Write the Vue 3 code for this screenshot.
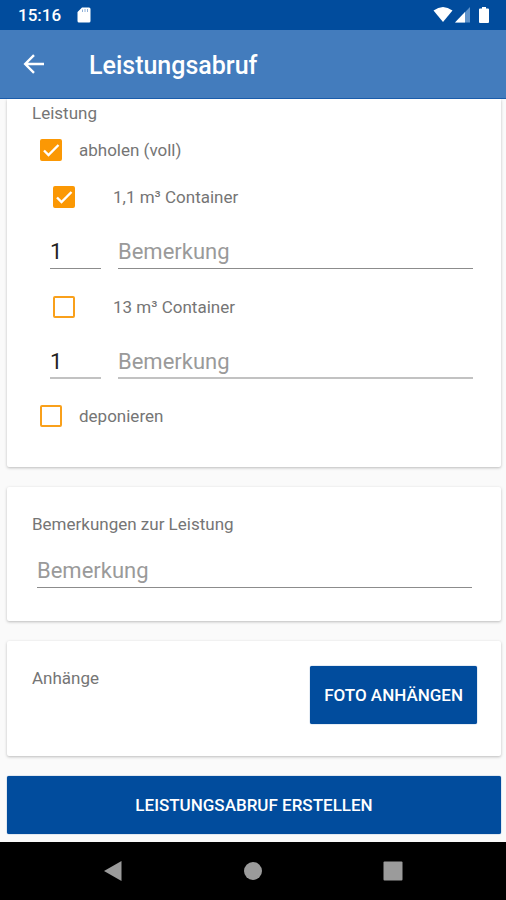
<script setup>
import { ref } from 'vue'

const pickup = ref(true)
const deposit = ref(false)
const remark = ref('')
const containers = ref([
  { id: 'c1', label: '1,1 m³ Container', checked: true, amount: '1', note: '' },
  { id: 'c13', label: '13 m³ Container', checked: false, amount: '1', note: '' },
])
</script>

<template>
  <div class="screen">
    <div class="status-bar">
      <span class="clock">15:16</span>
      <svg class="sd" viewBox="0 0 14 16" aria-hidden="true">
        <path d="M5 0.500H12a1.500 1.500 0 0 1 1.500 1.500V14a1.500 1.500 0 0 1-1.500 1.500H2A1.500 1.500 0 0 1 .5 14V5z" fill="#fff" />
        <path d="M5.500 2.500v2.500M8 2v3M10.500 2v3" stroke="#8fb0d8" stroke-width="1" />
      </svg>
      <svg class="signals" viewBox="0 0 58 18" aria-hidden="true">
        <path d="M0.500 4.500Q10 -2.500 19.500 4.500L10 16z" fill="#fff" />
        <path d="M37 1V16.500H22z" fill="#5f93cb" />
        <path d="M32 6V16.500H22z" fill="#fff" />
        <path d="M49 1h4v1.500h2a1 1 0 0 1 1 1V16a1 1 0 0 1-1 1h-8a1 1 0 0 1-1-1V3.500a1 1 0 0 1 1-1h2z" fill="#fff" />
      </svg>
    </div>

    <header class="app-bar">
      <button class="back" type="button" aria-label="Zurück">
        <svg viewBox="0 0 22 20" aria-hidden="true">
          <path d="M21 10H2.500M11 1.200L2.200 10L11 18.800" fill="none" stroke="#fff" stroke-width="2.400" />
        </svg>
      </button>
      <h1>Leistungsabruf</h1>
    </header>

    <form class="content" @submit.prevent>
      <section class="card services">
        <h2 class="heading">Leistung</h2>
        <label class="option">
          <span class="tick">
            <input v-model="pickup" type="checkbox" />
            <svg viewBox="0 0 22 22" aria-hidden="true"><path d="M4 11.500L8.500 16L18.500 6" /></svg>
          </span>
          abholen (voll)
        </label>

        <div v-for="item in containers" :key="item.id" class="container-item">
          <label class="option nested">
            <span class="tick">
              <input v-model="item.checked" type="checkbox" />
              <svg viewBox="0 0 22 22" aria-hidden="true"><path d="M4 11.500L8.500 16L18.500 6" /></svg>
            </span>
            {{ item.label }}
          </label>
          <div class="fields" :class="{ inactive: !item.checked }">
            <input v-model="item.amount" class="field amount" type="text" inputmode="numeric" aria-label="Anzahl" />
            <input v-model="item.note" class="field" type="text" placeholder="Bemerkung" aria-label="Bemerkung" />
          </div>
        </div>

        <label class="option">
          <span class="tick">
            <input v-model="deposit" type="checkbox" />
            <svg viewBox="0 0 22 22" aria-hidden="true"><path d="M4 11.500L8.500 16L18.500 6" /></svg>
          </span>
          deponieren
        </label>
      </section>

      <section class="card remarks">
        <label class="heading" for="remark">Bemerkungen zur Leistung</label>
        <input id="remark" v-model="remark" class="field" type="text" placeholder="Bemerkung" />
      </section>

      <section class="card attachments">
        <h2 class="heading">Anhänge</h2>
        <button class="action" type="button">FOTO ANHÄNGEN</button>
      </section>

      <button class="action submit" type="submit">LEISTUNGSABRUF ERSTELLEN</button>
    </form>

    <nav class="nav-bar">
      <button type="button" aria-label="Zurück">
        <svg viewBox="0 0 20 20"><path d="M1 10L18.500 0V20z" /></svg>
      </button>
      <button type="button" aria-label="Startseite">
        <svg viewBox="0 0 20 20"><circle cx="10" cy="10" r="9" /></svg>
      </button>
      <button type="button" aria-label="Übersicht">
        <svg viewBox="0 0 20 20"><rect x="0.500" y="0.500" width="19" height="19" rx="1" /></svg>
      </button>
    </nav>
  </div>
</template>

<style>
body {
  margin: 0;
  background: #fafafa;
}
</style>

<style scoped>
* {
  box-sizing: border-box;
}

.screen {
  display: flex;
  flex-direction: column;
  min-height: 100vh;
  font-family: Roboto, "Liberation Sans", sans-serif;
  font-size: 17px;
  color: #757575;
  background: #fafafa;
}

button {
  padding: 0;
  border: 0;
  background: none;
  font: inherit;
  cursor: pointer;
}

svg {
  display: block;
}

.status-bar {
  display: flex;
  align-items: center;
  height: 30px;
  padding: 0 15px 0 18px;
  background: #014c9d;
  color: #fff;
}

.clock {
  font-size: 17px;
  font-weight: 500;
  line-height: 30px;
}

.sd {
  width: 14px;
  height: 16px;
  margin-left: 16px;
}

.signals {
  width: 58px;
  height: 18px;
  margin-left: auto;
}

.app-bar {
  display: flex;
  align-items: center;
  gap: 44px;
  height: 69px;
  padding: 0 23px;
  background: #437cbd;
  border-bottom: 1px solid #1a5cab;
  color: #fff;
}

.back svg {
  width: 22px;
  height: 20px;
}

h1 {
  margin: 0;
  padding-top: 4px;
  font-size: 25px;
  font-weight: 500;
  line-height: 32px;
}

.content {
  display: flex;
  flex: 1;
  flex-direction: column;
  gap: 20px;
  padding: 0 5px 7px 7px;
}

.card {
  background: #fff;
  border-radius: 2px;
  box-shadow: 0 1px 3px rgba(0, 0, 0, 0.25);
}

.heading {
  display: block;
  margin: 0;
  font-size: 17px;
  font-weight: 400;
  line-height: 24px;
}

.services {
  padding: 2px 28px 26px 25px;
  border-radius: 0 0 2px 2px;
  clip-path: inset(0 -4px -4px -4px);
}

.option {
  display: flex;
  align-items: center;
  gap: 17px;
  height: 50px;
  padding-left: 8px;
}

.option.nested {
  gap: 38px;
  height: 44px;
  padding-left: 21px;
}

.tick {
  display: grid;
  width: 22px;
  height: 22px;
}

.tick > * {
  grid-area: 1 / 1;
}

.tick input {
  appearance: none;
  width: 22px;
  height: 22px;
  margin: 0;
  border: 2px solid #f9a01b;
  border-radius: 2px;
  background: #fff;
}

.tick input:checked {
  border-color: #fb9804;
  background: #fb9804;
}

.tick svg {
  visibility: hidden;
  width: 22px;
  height: 22px;
  fill: none;
  stroke: #fff;
  stroke-width: 2.4;
  pointer-events: none;
}

.tick input:checked + svg {
  visibility: visible;
}

.container-item {
  padding-bottom: 16px;
}

.container-item:nth-last-child(2) {
  padding-bottom: 12px;
}

.fields {
  display: flex;
  gap: 17px;
  padding: 16px 0 0 18px;
}

.field {
  flex: 1;
  width: 100%;
  min-width: 0;
  height: 34px;
  padding: 0;
  border: 0;
  border-bottom: 1px solid #8c8c8c;
  border-radius: 0;
  outline: 0;
  background: transparent;
  color: #222;
  font-family: inherit;
  font-size: 22px;
  line-height: 32px;
}

.field::placeholder {
  color: #9a9a9a;
  opacity: 1;
}

.field.amount {
  flex: 0 0 51px;
}

.inactive .field {
  border-bottom: 2px solid #c2c2c2;
}

.remarks {
  padding: 25px 29px 33px 25px;
}

.remarks .field {
  display: block;
  width: auto;
  min-width: calc(100% - 5px);
  margin: 18px 0 0 5px;
}

.attachments {
  display: flex;
  align-items: flex-start;
  justify-content: space-between;
  padding: 25px 24px 32px 25px;
}

.action {
  height: 58px;
  padding: 0 14px;
  border-radius: 2px;
  background: #014c9d;
  color: #fff;
  font-size: 17px;
  font-weight: 500;
  box-shadow: 0 0 1px #014c9d;
}

.nav-bar {
  display: flex;
  align-items: center;
  justify-content: center;
  gap: 120px;
  height: 58px;
  background: #000;
}

.nav-bar svg {
  width: 20px;
  height: 20px;
  fill: #9b9b9b;
}
</style>
